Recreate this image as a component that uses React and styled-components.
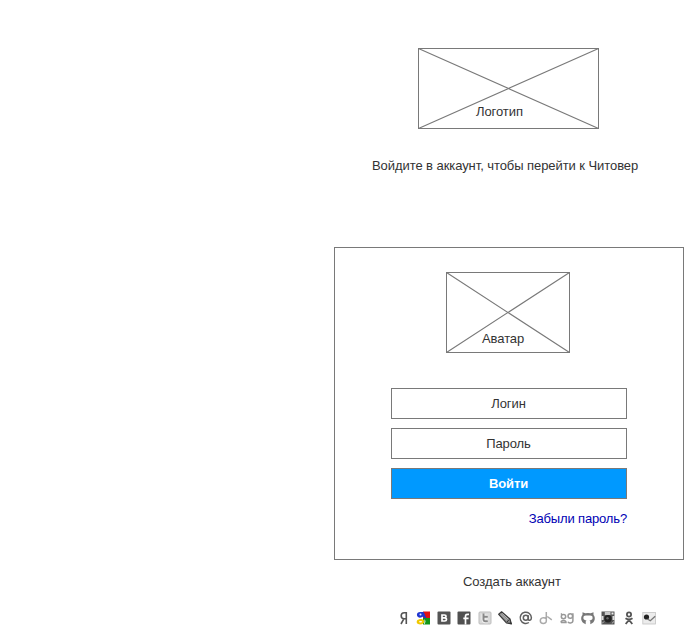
import React from "react";
import styled, { createGlobalStyle } from "styled-components";

const GlobalStyle = createGlobalStyle`
  * { box-sizing: border-box; }
  body {
    margin: 0;
    background: #fff;
    color: #333;
    font: 13px/15px "Liberation Sans", Arial, sans-serif;
  }
`;

const Page = styled.main`
  display: flex;
  flex-direction: column;
  width: 350px;
  height: 635px;
  margin-left: 334px;
  padding-top: 48px;
`;

const PlaceholderFrame = styled.div`
  position: relative;
  flex: none;
  width: ${(p) => p.$width}px;
  height: 81px;
  margin-left: ${(p) => p.$indent}px;
  svg { display: block; }
`;

const PlaceholderLabel = styled.span`
  position: absolute;
  left: ${(p) => p.$left}px;
  top: ${(p) => p.$top}px;
  white-space: nowrap;
  letter-spacing: -0.08px;
`;

const Heading = styled.h1`
  margin: 29px 0 0 38px;
  font-size: 13px;
  font-weight: 400;
  line-height: 15px;
  white-space: nowrap;
  letter-spacing: -0.07px;
`;

const Panel = styled.section`
  height: 313px;
  margin-top: 74px;
  padding: 24px 56px;
  border: 1px solid #797979;
`;

const Form = styled.div`
  display: flex;
  flex-direction: column;
  gap: 9px;
  margin-top: 35px;
`;

const Field = styled.div`
  display: flex;
  align-items: center;
  justify-content: center;
  height: 31px;
  padding-right: 1px;
  border: 1px solid #797979;
  letter-spacing: -0.08px;
`;

const Submit = styled.button`
  height: 31px;
  padding: 0 1px 0 0;
  border: 1px solid #797979;
  background: #0099ff;
  color: #fff;
  font: bold 13px/15px "Liberation Sans", Arial, sans-serif;
  letter-spacing: -0.1px;
`;

const ForgotLink = styled.a`
  align-self: flex-end;
  margin-top: 3px;
  color: #0000b4;
  white-space: nowrap;
  letter-spacing: -0.15px;
`;

const CreateLink = styled.a`
  margin: 14px 0 0 129px;
  white-space: nowrap;
  letter-spacing: -0.05px;
`;

const SocialRow = styled.nav`
  display: flex;
  gap: 6.55px;
  margin: 22px 0 0 61.6px;
`;

const Icon = styled.svg.attrs({ viewBox: "0 0 14 14" })`
  display: block;
  flex: none;
  width: 14px;
  height: 14px;
  overflow: visible;
`;

function Placeholder({ width, indent, label, left, top }) {
  return (
    <PlaceholderFrame $width={width} $indent={indent}>
      <svg width={width} height="81" fill="none" stroke="#797979">
        <rect x=".5" y=".5" width={width - 1} height="80" />
        <path d={`M.5 .5L${width - 0.5} 80.5M.5 80.5L${width - 0.5} .5`} strokeWidth="1.1" />
      </svg>
      <PlaceholderLabel $left={left} $top={top}>{label}</PlaceholderLabel>
    </PlaceholderFrame>
  );
}

const Yandex = () => (
  <Icon fill="none" stroke="#555" strokeWidth="1.6">
    <path d="M10.300 13V1.800H8.200C4.200 1.800 4.200 7.800 8.200 7.800H10.300M7.800 7.800L5 13" />
  </Icon>
);

const Google = () => (
  <Icon>
    <path d="M7 .5H14V7H7z" fill="#e01212" />
    <path d="M7 7H14V13.5H7z" fill="#109618" />
    <path d="M0 .5H7V13.5H0z" fill="#fff" />
    <path d="M7.500 1H4C1 1 0 4 2 6C3.500 7.300 6 6.500 7 5.500L9 7.500L10.500 6.500C8.500 5 9.500 3.500 7.500 1z" fill="#2036d0" />
    <circle cx="4.500" cy="3.500" r="1" fill="#e8ecff" />
    <path d="M1 9.500C3 7.500 7 7.500 8 9.500C9 12 6.500 13.500 4 13.400C1 13.300 0 11.500 1 9.500z" fill="#f0c800" />
    <ellipse cx="4.6" cy="10.8" rx="1.600" ry=".8" fill="#fff" />
    <path d="M8.300 8L9.500 10L9 12.500L8 13.500L8.600 10z" fill="#fff" />
  </Icon>
);

const Vk = () => (
  <Icon>
    <rect x=".5" y=".5" width="13" height="13" rx="1" fill="#555" />
    <path d="M5 4H7.500C9.600 4 9.600 6.700 7.500 6.800H5.200H7.700C10.200 7 10 10 7.700 10H5z" fill="none" stroke="#fff" strokeWidth="1.7" />
  </Icon>
);

const Facebook = () => (
  <Icon>
    <rect x=".5" y=".5" width="13" height="13" rx="1" fill="#505050" />
    <path d="M8.500 13.500V5.200C8.500 3.600 9.500 3.200 12 3.400M6.300 7.400H11.600" fill="none" stroke="#fff" strokeWidth="1.7" />
  </Icon>
);

const Twitter = () => (
  <Icon>
    <rect x="1" y="1" width="12" height="12" rx="1" fill="#dadada" stroke="#bdbdbd" />
    <path d="M5.500 3V8.500C5.500 10.300 6.800 10.500 9.800 10.300M5.500 5.700H9.800" fill="none" stroke="#f4f4f4" strokeWidth="3.800" />
    <path d="M5.500 2.600V8.500C5.500 10.300 6.800 10.500 9.800 10.300M5.500 5.700H9.800" fill="none" stroke="#888" strokeWidth="2" />
  </Icon>
);

const Pencil = () => (
  <Icon strokeLinejoin="round">
    <path d="M.7 3.300L3.600 .8L12 8L13.300 12.900L8.400 11.800z" fill="#888" stroke="#3a3a3a" strokeWidth="1.200" />
    <path d="M2.600 3.200L9.300 9.600M4.200 2.500L10.800 8.700" stroke="#c5c5c5" strokeWidth=".8" />
    <path d="M9 11L11.200 8.400M11.700 12.200L13.300 12.900L12.800 11.300" fill="#222" stroke="#333" />
  </Icon>
);

const Mail = () => (
  <Icon fill="none" stroke="#606060" strokeWidth="1.5">
    <circle cx="6.8" cy="6.8" r="2.5" />
    <path d="M9.300 4.300V8C9.300 10.200 12.400 9.700 12.400 6.800A5.600 5.600 0 1 0 9.900 11.500" />
  </Icon>
);

const Dash = () => (
  <Icon fill="none" stroke="#aaa" strokeWidth="1.500">
    <path d="M7.300 1V10C7.300 13.300 1.300 13.300 1.300 9.700C1.300 6.500 5 6 7.300 7.600M8.300 5.500L12.800 8.800" />
  </Icon>
);

const Double = () => (
  <Icon fill="none" stroke="#999" strokeWidth="1.500">
    <circle cx="3.500" cy="5.600" r="2.200" />
    <circle cx="10.300" cy="5" r="2.300" />
    <path d="M1 11.500C1 8.800 6 8.800 6 11.500H1M12.900 2.200V9.500C12.900 12.500 8.500 12.500 8 10.700M.9 2.500L2.200 3.700" />
  </Icon>
);

const Github = () => (
  <Icon fill="#777">
    <path d="M4.700 13.200C-1 11 -.3 5.500 1.500 3.900L1.500 1.200L4.300 2.300Q7 1.500 9.700 2.300L12.500 1.200L12.500 3.900C14.300 5.500 15 11 9.300 13.200V10.500L8.500 9.500C12 9.200 12 7 11.100 5.100C9.500 3.900 8.500 4.600 7 4.600S4.500 3.900 2.900 5.100C2 7 2 9.200 5.500 9.500L4.700 10.500z" />
  </Icon>
);

const Instagram = () => (
  <Icon>
    <path d="M.5 .5H13.500V13.500H.5z" fill="#555" />
    <path d="M3.800 .8H9.500V4H3.800z" fill="#c8c8c8" />
    <path d="M10.500 1.500H12.500V3.500H10.500z" fill="#eee" />
    <path d="M.5 5H2.500V9H.5zM11.500 5H13.500V9H11.500z" fill="#ddd" />
    <circle cx="7" cy="7.800" r="3.700" fill="#222" />
    <circle cx="6.500" cy="7.200" r="1.200" fill="#666" />
    <path d="M1 12.500L3 10.500M10.800 12.500L13 10.500" fill="none" stroke="#bbb" />
  </Icon>
);

const Odnoklassniki = () => (
  <Icon fill="none" stroke="#555" strokeWidth="1.800">
    <circle cx="7" cy="3.500" r="2.100" />
    <path d="M3.500 7.300Q7 9.700 10.500 7.300M7 8.900L3.700 13M7 8.900L10.300 13" />
  </Icon>
);

const Verified = () => (
  <Icon>
    <rect x=".8" y="1.500" width="12.700" height="11.500" fill="#ececec" stroke="#c4c4c4" strokeWidth=".8" />
    <circle cx="4.500" cy="6" r="2.600" fill="#222" />
    <path d="M5.500 8L8.300 9.800L13.200 5.200" fill="none" stroke="#777" strokeWidth="1.300" />
  </Icon>
);

const networks = [Yandex, Google, Vk, Facebook, Twitter, Pencil, Mail, Dash, Double, Github, Instagram, Odnoklassniki, Verified];

export default function App() {
  return (
    <>
      <GlobalStyle />
      <Page>
        <Placeholder width={181} indent={84} label="Логотип" left={58} top={56} />
        <Heading>Войдите в аккаунт, чтобы перейти к Читовер</Heading>
        <Panel>
          <Placeholder width={124} indent={55} label="Аватар" left={36} top={59} />
          <Form>
            <Field>Логин</Field>
            <Field>Пароль</Field>
            <Submit type="button">Войти</Submit>
            <ForgotLink>Забыли пароль?</ForgotLink>
          </Form>
        </Panel>
        <CreateLink>Создать аккаунт</CreateLink>
        <SocialRow>
          {networks.map((Network, i) => <Network key={i} />)}
        </SocialRow>
      </Page>
    </>
  );
}
